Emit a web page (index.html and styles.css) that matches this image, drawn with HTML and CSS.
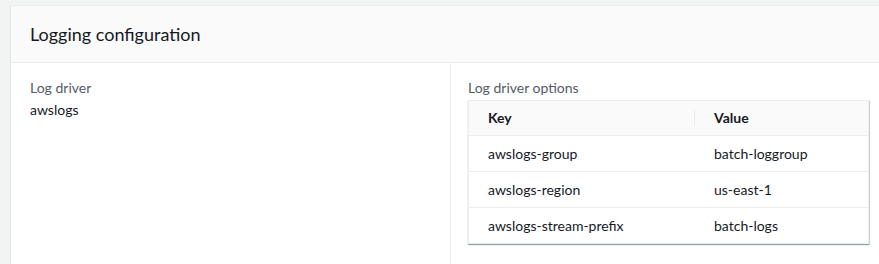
FILE: index.html
```html
<!DOCTYPE html>
<html>
<head>
  <title>Logging configuration</title>
  <link rel="stylesheet" href="styles.css">
</head>
<body>
  <div class="container">
    <div class="panel">
      <div class="panel-header">
        <h2 class="panel-title">Logging configuration</h2>
      </div>

      <div class="panel-body">
        <div class="column">
          <div class="label">Log driver</div>
          <div class="value">awslogs</div>
        </div>

        <div class="column column-divided">
          <div class="label">Log driver options</div>
          <table class="options-table">
            <thead>
              <tr>
                <th class="key-col"><span class="th-inner">Key</span></th>
                <th><span class="th-inner">Value</span></th>
              </tr>
            </thead>
            <tbody>
              <tr>
                <td>awslogs-group</td>
                <td>batch-loggroup</td>
              </tr>
              <tr>
                <td>awslogs-region</td>
                <td>us-east-1</td>
              </tr>
              <tr>
                <td>awslogs-stream-prefix</td>
                <td>batch-logs</td>
              </tr>
            </tbody>
          </table>
        </div>
      </div>
    </div>
  </div>
</body>
</html>
```

FILE: styles.css
```css
body {
  margin: 0;
  padding: 0;
  font-family: 'Lato', 'Noto Sans', sans-serif;
  font-size: 14px;
  color: #16191f;
  background-color: #f2f3f3;
  overflow: hidden;
}
.container {
  padding: 5px 0 0 10px;
}
.panel {
  display: flex;
  flex-direction: column;
  background-color: white;
  border-left: 1px solid #e4e6e6;
  border-top: 1px solid #eaeded;
  height: 258px;
}
.panel-header {
  background-color: #fafafa;
  border-bottom: 1px solid #eaeded;
  height: 56px;
  display: flex;
  align-items: center;
  padding: 0 19px;
}
.panel-title {
  margin: 0;
  font-size: 18px;
  font-weight: 400;
  line-height: 22px;
}
.panel-body {
  flex: 1;
  display: grid;
  grid-template-columns: 439px 1fr;
}
.column {
  padding: 14px 19px;
}
.column-divided {
  border-left: 1px solid #eaeded;
  padding-left: 17px;
}
.label {
  color: #545b64;
  line-height: 22px;
}
.value {
  line-height: 22px;
}
.options-table {
  width: 401px;
  border-collapse: collapse;
  margin-top: 1px;
  border: 1px solid #eaeded;
  box-shadow: 0 1px 1px 0 rgba(0, 28, 36, 0.3), 1px 1px 1px 0 rgba(0, 28, 36, 0.15);
}
.options-table th {
  background-color: #fafafa;
  text-align: left;
  font-weight: 700;
  height: 34px;
  padding: 0;
  border-bottom: 1px solid #eaeded;
}
.options-table .key-col {
  width: 226px;
}
.th-inner {
  display: block;
  padding: 0 19px;
  line-height: 16px;
}
.key-col .th-inner {
  border-right: 1px solid #eaeded;
}
.options-table td {
  height: 35px;
  padding: 0 19px;
  border-top: 1px solid #eaeded;
}
```
